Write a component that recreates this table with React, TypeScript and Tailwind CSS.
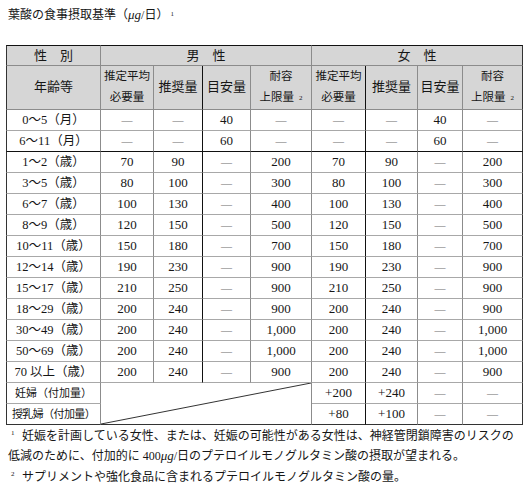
import React from "react";

const RIGHT = [
  "border-r-[#8c8c8c]",
  "border-r-[#8c8c8c]",
  "border-r-[#111111]",
  "border-r-[#8c8c8c]",
  "border-r-[#8c8c8c]",
  "border-r-[#111111]",
  "border-r-[#8c8c8c]",
  "border-r-[#8c8c8c]",
  "border-r-[#333333]",
];

type Row = [string, string[]];

const rows: Row[] = [
  ["0～5（月）", ["—", "—", "40", "—"]],
  ["6～11（月）", ["—", "—", "60", "—"]],
  ["1～2（歳）", ["70", "90", "—", "200"]],
  ["3～5（歳）", ["80", "100", "—", "300"]],
  ["6～7（歳）", ["100", "130", "—", "400"]],
  ["8～9（歳）", ["120", "150", "—", "500"]],
  ["10～11（歳）", ["150", "180", "—", "700"]],
  ["12～14（歳）", ["190", "230", "—", "900"]],
  ["15～17（歳）", ["210", "250", "—", "900"]],
  ["18～29（歳）", ["200", "240", "—", "900"]],
  ["30～49（歳）", ["200", "240", "—", "1,000"]],
  ["50～69（歳）", ["200", "240", "—", "1,000"]],
  ["70 以上（歳）", ["200", "240", "—", "900"]],
];

function Val({ v }: { v: string }) {
  if (v === "—") return <span className="text-[11px] text-[#6e6e6e]">—</span>;
  return <span>{v}</span>;
}

const cell = "border-r border-b p-0 text-center align-middle h-[21px] leading-[18px] text-[13px]";

function HeadTwo({ a, b, sup }: { a: string; b: string; sup?: boolean }) {
  return (
    <div className="flex flex-col items-center leading-[21px] text-[11.5px]">
      <span>{a}</span>
      <span>
        {b}
        {sup && <span className="ml-[5px] text-[7px] align-middle">2</span>}
      </span>
    </div>
  );
}

export default function App() {
  const headGroup = (key: string, offset: number) => (
    <React.Fragment key={key}>
      <th className={`${cell} h-[42px] font-normal bg-[#d6d6d6] border-b-[#8c8c8c] ${RIGHT[offset]}`}>
        <HeadTwo a="推定平均" b="必要量" />
      </th>
      <th className={`${cell} h-[42px] font-normal bg-[#d6d6d6] border-b-[#8c8c8c] text-[11.5px] ${RIGHT[offset + 1]}`}>推奨量</th>
      <th className={`${cell} h-[42px] font-normal bg-[#d6d6d6] border-b-[#8c8c8c] text-[11.5px] ${RIGHT[offset + 2]}`}>目安量</th>
      <th className={`${cell} h-[42px] font-normal bg-[#d6d6d6] border-b-[#8c8c8c] ${RIGHT[offset + 3]}`}>
        <HeadTwo a="耐容" b="上限量" sup />
      </th>
    </React.Fragment>
  );

  return (
    <div className="w-[530px] h-[504px] bg-white text-[#161616] font-['Liberation_Serif','Noto_Sans_CJK_JP',serif]">
      <div className="h-[45px] pl-[8px] pt-[6px] text-[12px] leading-[18px]">
        葉酸の食事摂取基準（<span className="italic text-[13px]">μg</span>/日）
        <span className="ml-[2px] text-[7px] align-top relative top-[-1px]">1</span>
      </div>
      <table className="ml-[6px] w-[517px] table-fixed border-separate border-spacing-0">
        <colgroup>
          <col className="w-[95px]" />
          <col className="w-[53px]" />
          <col className="w-[49px]" />
          <col className="w-[48px]" />
          <col className="w-[61px]" />
          <col className="w-[54px]" />
          <col className="w-[52px]" />
          <col className="w-[45px]" />
          <col className="w-[60px]" />
        </colgroup>
        <thead>
          <tr>
            <th className={`${cell} border-t border-t-[#111111] border-l border-l-[#333333] font-normal bg-[#d6d6d6] border-b-[#8c8c8c] text-[12px] ${RIGHT[0]}`}>性　別</th>
            <th colSpan={4} className={`${cell} border-t border-t-[#111111] font-normal bg-[#d6d6d6] border-b-[#8c8c8c] text-[12px] ${RIGHT[4]}`}>男　性</th>
            <th colSpan={4} className={`${cell} border-t border-t-[#111111] font-normal bg-[#d6d6d6] border-b-[#8c8c8c] text-[12px] ${RIGHT[8]}`}>女　性</th>
          </tr>
          <tr>
            <th className={`${cell} h-[42px] border-l border-l-[#333333] font-normal bg-[#d6d6d6] border-b-[#8c8c8c] text-[11.5px] ${RIGHT[0]}`}>年齢等</th>
            {headGroup("m", 1)}
            {headGroup("f", 5)}
          </tr>
        </thead>
        <tbody>
          {rows.map(([label, vals], i) => {
            const bottom = i === 1 ? "border-b-[#111111]" : "border-b-[#a8a8a8]";
            return (
              <tr key={label}>
                <td className={`${cell} border-l border-l-[#333333] ${bottom} ${RIGHT[0]}`}>
                  <span className="text-[12.5px]">{label}</span>
                </td>
                {vals.map((v, j) => (
                  <td key={"m" + j} className={`${cell} ${bottom} ${RIGHT[1 + j]}`}>
                    <Val v={v} />
                  </td>
                ))}
                {vals.map((v, j) => (
                  <td key={"f" + j} className={`${cell} ${bottom} ${RIGHT[5 + j]}`}>
                    <Val v={v} />
                  </td>
                ))}
              </tr>
            );
          })}
          <tr>
            <td className={`${cell} border-l border-l-[#333333] border-b-[#a8a8a8] ${RIGHT[0]}`}>
              <span className="text-[11px]">妊婦（付加量）</span>
            </td>
            <td colSpan={4} rowSpan={2} className={`border-r border-b p-0 relative border-b-[#333333] ${RIGHT[4]}`}>
              <svg className="absolute inset-0 w-full h-full" preserveAspectRatio="none" viewBox="0 0 100 100">
                <line x1="0" y1="100" x2="100" y2="0" stroke="#333" strokeWidth="1" vectorEffect="non-scaling-stroke" />
              </svg>
            </td>
            {["+200", "+240", "—", "—"].map((v, j) => (
              <td key={j} className={`${cell} border-b-[#a8a8a8] ${RIGHT[5 + j]}`}>
                <Val v={v} />
              </td>
            ))}
          </tr>
          <tr>
            <td className={`${cell} border-l border-l-[#333333] border-b-[#333333] ${RIGHT[0]}`}>
              <span className="text-[11px] tracking-[-0.6px]">授乳婦（付加量）</span>
            </td>
            {["+80", "+100", "—", "—"].map((v, j) => (
              <td key={j} className={`${cell} border-b-[#333333] ${RIGHT[5 + j]}`}>
                <Val v={v} />
              </td>
            ))}
          </tr>
        </tbody>
      </table>
      <div className="pt-[1px] pl-[8px] text-[12px] leading-[20.5px]">
        <div>
          <span className="inline-block w-[14px] pl-[3px] text-[7px] align-top leading-[14px]">1</span>
          妊娠を計画している女性、または、妊娠の可能性がある女性は、神経管閉鎖障害のリスクの
        </div>
        <div>
          低減のために、付加的に 400<span className="italic text-[13px]">μg</span>/日のプテロイルモノグルタミン酸の摂取が望まれる。
        </div>
        <div>
          <span className="inline-block w-[14px] pl-[3px] text-[7px] align-top leading-[14px]">2</span>
          サプリメントや強化食品に含まれるプテロイルモノグルタミン酸の量。
        </div>
      </div>
    </div>
  );
}
